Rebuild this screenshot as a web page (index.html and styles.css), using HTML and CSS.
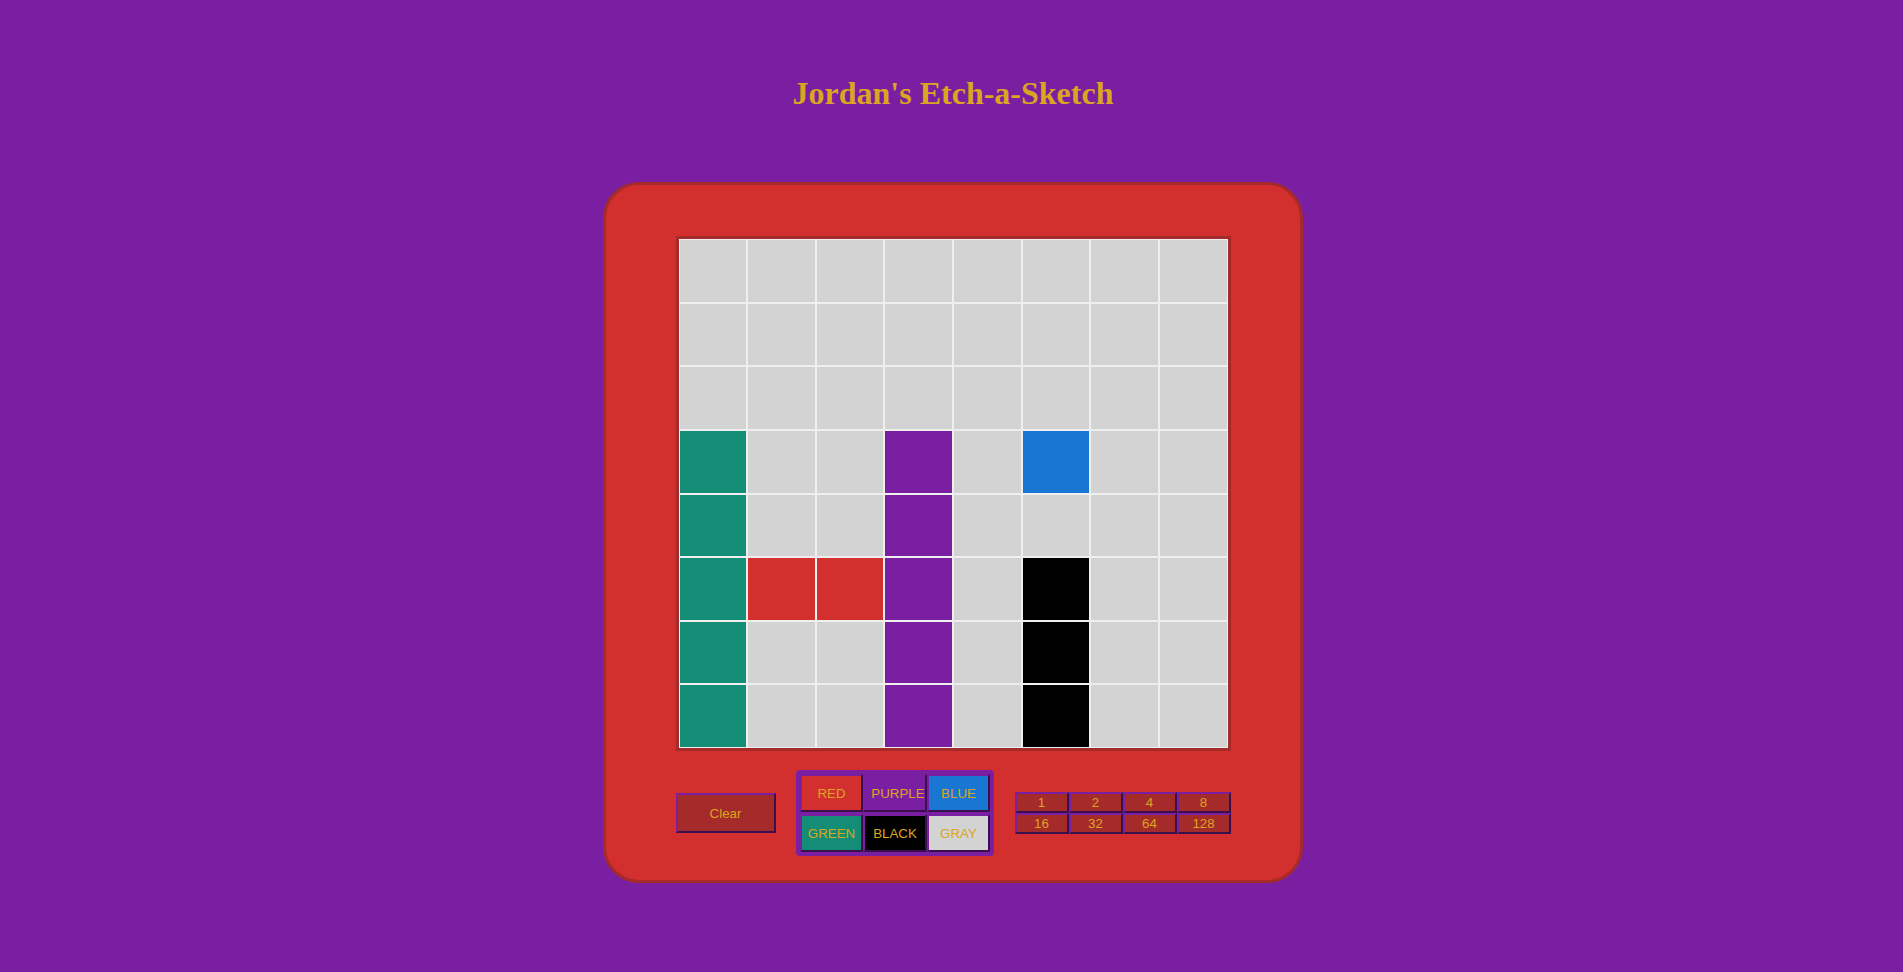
FILE: index.html
```html
<!DOCTYPE html>
<html lang="en">
<head>
<meta charset="utf-8">
<title>Jordan's Etch-a-Sketch</title>
<link rel="stylesheet" href="styles.css">
</head>
<body>
<h1 class="title">Jordan's Etch-a-Sketch</h1>
<main class="board">
  <div class="grid">
    <div class="cell"></div><div class="cell"></div><div class="cell"></div><div class="cell"></div><div class="cell"></div><div class="cell"></div><div class="cell"></div><div class="cell"></div>
    <div class="cell"></div><div class="cell"></div><div class="cell"></div><div class="cell"></div><div class="cell"></div><div class="cell"></div><div class="cell"></div><div class="cell"></div>
    <div class="cell"></div><div class="cell"></div><div class="cell"></div><div class="cell"></div><div class="cell"></div><div class="cell"></div><div class="cell"></div><div class="cell"></div>
    <div class="cell green"></div><div class="cell"></div><div class="cell"></div><div class="cell purple"></div><div class="cell"></div><div class="cell blue"></div><div class="cell"></div><div class="cell"></div>
    <div class="cell green"></div><div class="cell"></div><div class="cell"></div><div class="cell purple"></div><div class="cell"></div><div class="cell"></div><div class="cell"></div><div class="cell"></div>
    <div class="cell green"></div><div class="cell red"></div><div class="cell red"></div><div class="cell purple"></div><div class="cell"></div><div class="cell black"></div><div class="cell"></div><div class="cell"></div>
    <div class="cell green"></div><div class="cell"></div><div class="cell"></div><div class="cell purple"></div><div class="cell"></div><div class="cell black"></div><div class="cell"></div><div class="cell"></div>
    <div class="cell green"></div><div class="cell"></div><div class="cell"></div><div class="cell purple"></div><div class="cell"></div><div class="cell black"></div><div class="cell"></div><div class="cell"></div>
  </div>
  <div class="controls">
    <button class="btn clear">Clear</button>
    <div class="palette">
      <button class="btn swatch red">RED</button>
      <button class="btn swatch purple">PURPLE</button>
      <button class="btn swatch blue">BLUE</button>
      <button class="btn swatch green">GREEN</button>
      <button class="btn swatch black">BLACK</button>
      <button class="btn swatch gray">GRAY</button>
    </div>
    <div class="sizes">
      <button class="btn size">1</button>
      <button class="btn size">2</button>
      <button class="btn size">4</button>
      <button class="btn size">8</button>
      <button class="btn size">16</button>
      <button class="btn size">32</button>
      <button class="btn size">64</button>
      <button class="btn size">128</button>
    </div>
  </div>
</main>
</body>
</html>
```
FILE: styles.css
```css
html, body {
  margin: 0;
  padding: 0;
}

body {
  background: #7b1fa2;
  font-family: "Liberation Sans", Arial, sans-serif;
  padding-left: 3px;
}

.title {
  margin: 0;
  padding-top: 75px;
  text-align: center;
  font-family: "Liberation Serif", "Times New Roman", serif;
  font-weight: bold;
  font-size: 32px;
  line-height: 37px;
  color: #daa520;
}

.board {
  box-sizing: border-box;
  width: 700px;
  height: 701px;
  margin: 70px auto 0;
  padding-top: 51px;
  background: #d32f2f;
  border: 3px solid #a52a2a;
  border-radius: 36px;
  display: flex;
  flex-direction: column;
  align-items: center;
}

.grid {
  width: 549px;
  height: 509px;
  border: 3px solid #a52a2a;
  display: grid;
  grid-template-columns: repeat(8, 1fr);
  grid-template-rows: repeat(8, 1fr);
  background: #f0f0f0;
}

.cell {
  border: 1px solid #efefef;
  background: #d3d3d3;
}

.cell.green { background: #138d75; }
.cell.purple { background: #7b1fa2; }
.cell.blue { background: #1976d2; }
.cell.red { background: #d32f2f; }
.cell.black { background: #000; }

.controls {
  width: 555px;
  margin-top: 19px;
  display: flex;
  justify-content: space-between;
  align-items: center;
}

.btn {
  box-sizing: border-box;
  margin: 0;
  padding: 1px 6px;
  font-family: "Liberation Sans", Arial, sans-serif;
  font-size: 13.333px;
  color: #daa520;
  border-width: 2px;
  border-style: solid;
  border-color: #7b1fa2 #3b0f4e #3b0f4e #7b1fa2;
  text-align: center;
  white-space: nowrap;
  overflow: visible;
}

.clear {
  width: 100px;
  height: 40px;
  background: #a52a2a;
}

.palette {
  background: #7b1fa2;
  border-radius: 4px;
  padding: 4px;
  display: grid;
  grid-template-columns: repeat(3, 63.5px);
  grid-template-rows: repeat(2, 38px);
  row-gap: 2px;
}

.swatch {
  width: 63.5px;
  height: 38px;
}

.swatch.red { background: #d32f2f; }
.swatch.purple { background: #7b1fa2; }
.swatch.blue { background: #1976d2; }
.swatch.green { background: #138d75; }
.swatch.black { background: #000; }
.swatch.gray { background: #d3d3d3; }

.sizes {
  display: grid;
  grid-template-columns: repeat(4, 54px);
  grid-template-rows: repeat(2, 21px);
}

.size {
  width: 54px;
  height: 21px;
  padding: 0;
  background: #a52a2a;
  line-height: 15px;
}
```
